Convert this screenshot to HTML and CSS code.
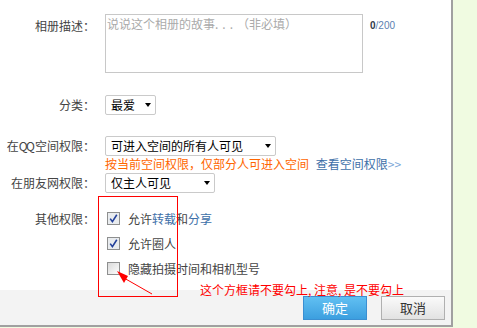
FILE: index.html
```html
<!DOCTYPE html>
<html lang="zh-CN">
	<head>
		<meta charset="UTF-8" />
		<meta name="viewport" content="width=device-width, initial-scale=1.0" />
		<title>编辑相册</title>

		<link rel="stylesheet" href="styles.css">
	</head>

	<body>
		<div class="dialog">
			<div class="form">
				<!-- 相册描述 -->
				<div class="row row-desc">
					<div class="label label-top">相册描述：</div>
					<div class="field field-inline">
						<div class="textarea">
							<span class="placeholder">说说这个相册的故事<span class="dots">...</span>（非必填）</span>
						</div>
						<div class="counter"><b>0</b>/200</div>
					</div>
				</div>

				<div class="row row-cat">
					<div class="label">分类：</div>
					<div class="field">
						<div class="select select-cat">最爱</div>
					</div>
				</div>

				<div class="row row-qq">
					<div class="label">在<span class="latin">QQ</span>空间权限：</div>
					<div class="field">
						<div class="select select-qq">可进入空间的所有人可见</div>
						<div class="hint">
							<span class="hint-warn">按当前空间权限，仅部分人可进入空间</span>
							<a class="hint-link">查看空间权限<span class="gt">&gt;&gt;</span></a>
						</div>
					</div>
				</div>

				<div class="row row-py">
					<div class="label">在朋友网权限：</div>
					<div class="field">
						<div class="select select-py">仅主人可见</div>
					</div>
				</div>

				<div class="row row-other">
					<div class="label label-check">其他权限：</div>
					<div class="field checks">
						<label class="check">
							<svg class="box" width="13" height="13" viewBox="0 0 13 13">
								<rect x="0.5" y="0.5" width="12" height="12" fill="#e9ecef" stroke="#8e8f8f" />
								<path d="M3.2 6.6 L5.4 9.6 L9.8 2.8" fill="none" stroke="#23409a" stroke-width="1.6" />
							</svg>
							<span>允许<em class="blue">转载</em>和<em class="blue">分享</em></span>
						</label>
						<label class="check">
							<svg class="box" width="13" height="13" viewBox="0 0 13 13">
								<rect x="0.5" y="0.5" width="12" height="12" fill="#e9ecef" stroke="#8e8f8f" />
								<path d="M3.2 6.6 L5.4 9.6 L9.8 2.8" fill="none" stroke="#23409a" stroke-width="1.6" />
							</svg>
							<span>允许圈人</span>
						</label>
						<label class="check">
							<svg class="box" width="13" height="13" viewBox="0 0 13 13">
								<defs>
									<linearGradient id="boxfill" x1="0" y1="0" x2="1" y2="1">
										<stop offset="0" stop-color="#d8d8d8" />
										<stop offset="1" stop-color="#ffffff" />
									</linearGradient>
								</defs>
								<rect x="0.5" y="0.5" width="12" height="12" fill="url(#boxfill)" stroke="#8e8f8f" />
							</svg>
							<span>隐藏拍摄时间和相机型号</span>
						</label>
					</div>
				</div>
			</div>

			<div class="footer">
				<button class="btn btn-ok">确定</button>
				<button class="btn btn-cancel">取消</button>
			</div>

			<!-- red annotation drawn over the form -->
			<div class="mark-box"></div>
			<svg class="mark-arrow" width="50" height="35" viewBox="0 0 50 35">
				<polygon points="7,6 18,11 14,18" fill="#f00" />
				<line x1="14" y1="13" x2="42" y2="29" stroke="#f00" stroke-width="1" />
			</svg>
			<div class="mark-note">这个方框请不要勾上, 注意, 是不要勾上</div>
		</div>
	</body>
</html>
```

FILE: styles.css
```css
body {
	margin: 0;
	background: #f0fbe1;
	font-family: "Noto Sans CJK SC", "Noto Sans", sans-serif;
	font-size: 12px;
	color: #444;
}

.dialog {
	position: relative;
	width: 451px;
	background: #fff;
	border-right: 2px solid #a0a0a0;
	border-bottom: 2px solid #a0a0a0;
}

.form {
	box-sizing: border-box;
	height: 290px;
	padding-top: 14px;
}

.row {
	display: grid;
	grid-template-columns: 95px auto;
	column-gap: 10px;
}

.label {
	text-align: right;
	line-height: 20px;
	white-space: nowrap;
}

.latin {
	letter-spacing: -1.5px;
	margin-right: 1.5px;
}

.label-top {
	padding-top: 5px;
	line-height: 14px;
}

.label-check {
	line-height: 25px;
}

.field-inline {
	display: flex;
	align-items: flex-start;
}

.textarea {
	box-sizing: border-box;
	width: 258px;
	height: 59px;
	border: 1px solid #c8c8c8;
	padding: 1px 0 0 1px;
	line-height: 16px;
}

.placeholder {
	color: #aaa;
}

.dots {
	letter-spacing: 4px;
}

.counter {
	margin: 6px 0 0 7px;
	font-family: "Liberation Sans", sans-serif;
	font-size: 10px;
	line-height: 12px;
	color: #5b7fb0;
}

.counter b {
	color: #2f3a4a;
}

.row-cat {
	margin-top: 22px;
}

.row-qq {
	margin-top: 21px;
}

.row-py {
	margin-top: 2px;
}

.row-other {
	margin-top: 13px;
}

.select {
	box-sizing: border-box;
	display: flex;
	align-items: center;
	justify-content: space-between;
	height: 20px;
	padding: 0 4px 0 5px;
	border: 1px solid #cacaca;
	border-radius: 2px;
	color: #000;
	line-height: 18px;
}

.select::after {
	content: "";
	border-left: 3.5px solid transparent;
	border-right: 3.5px solid transparent;
	border-top: 4px solid #000;
}

.select-cat {
	width: 51px;
}

.select-qq {
	width: 171px;
}

.select-py {
	width: 110px;
}

.hint {
	line-height: 15px;
	white-space: nowrap;
}

.hint-warn {
	color: #ff6600;
}

.hint-link {
	margin-left: 4px;
	color: #3d6fa8;
}

.gt {
	color: #7ea8d8;
}

.checks {
	display: flex;
	flex-direction: column;
}

.check {
	display: flex;
	align-items: center;
	gap: 8px;
	height: 25px;
	padding-left: 2px;
	white-space: nowrap;
}

.box {
	display: block;
	flex: none;
}

.blue {
	font-style: normal;
	color: #3d6fa8;
}

.footer {
	box-sizing: border-box;
	display: flex;
	justify-content: flex-end;
	gap: 14px;
	height: 35px;
	padding: 6px 6px 0 0;
	background: #f3f3f3;
}

.btn {
	box-sizing: border-box;
	width: 64px;
	height: 24px;
	padding: 0;
	font-family: "Noto Sans CJK SC", sans-serif;
	font-size: 13px;
	line-height: 22px;
	cursor: pointer;
}

.btn-ok {
	border: 1px solid #3b8fd2;
	background: linear-gradient(#61c0f2, #3c9fdf);
	color: #fff;
}

.btn-cancel {
	border: 1px solid #b0b0b0;
	background: linear-gradient(#fafafa, #e2e2e2);
	color: #333;
}

.mark-box {
	position: absolute;
	left: 98px;
	top: 196px;
	width: 80px;
	height: 101px;
	box-sizing: border-box;
	border: 1px solid #f00;
}

.mark-arrow {
	position: absolute;
	left: 110px;
	top: 265px;
}

.mark-note {
	position: absolute;
	left: 200px;
	top: 282px;
	color: #f00;
	line-height: 15px;
	white-space: nowrap;
}
```
